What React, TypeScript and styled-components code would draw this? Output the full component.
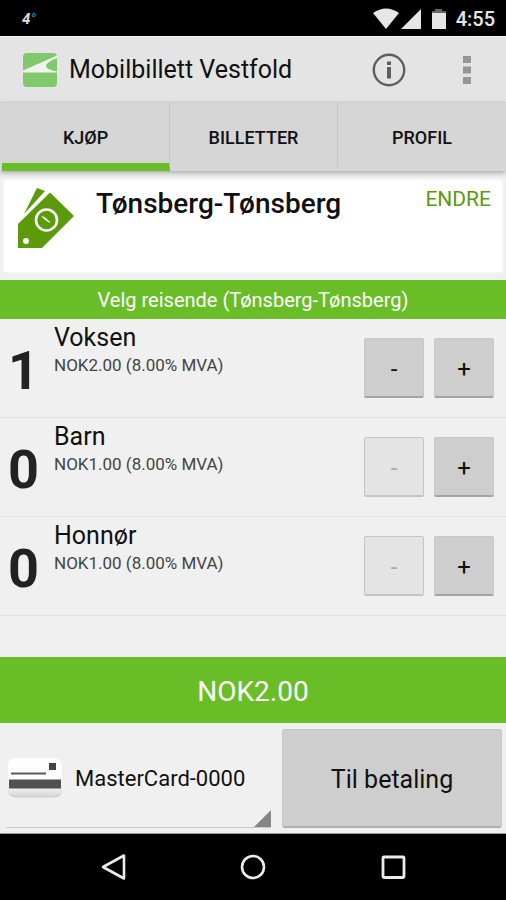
import React, { useState } from "react";
import styled, { createGlobalStyle } from "styled-components";

const GREEN = "#69be28";
const LEAF = "#5b9a0a";

const GlobalStyle = createGlobalStyle`
  *, *::before, *::after { box-sizing: border-box; }
  body { margin: 0; background: #f0f0f0; }
  button, select { font: inherit; color: inherit; margin: 0; }
`;

const Screen = styled.div`
  min-height: 100vh;
  display: flex;
  flex-direction: column;
  background: #f0f0f0;
  color: #111;
  font-family: Roboto, "Liberation Sans", sans-serif;
`;

const StatusBar = styled.div`
  height: 36px;
  display: flex;
  align-items: center;
  justify-content: space-between;
  padding: 2px 11px 0 22px;
  background: #000;
  color: #e6e6e6;
`;

const Temperature = styled.span`
  display: flex;
  color: #ddd;
  font-size: 15px;
  font-weight: 700;
  font-style: italic;
`;

const Degree = styled.span`
  color: #1288b4;
`;

const StatusIcons = styled.div`
  display: flex;
  align-items: center;
  gap: 9px;
`;

const Clock = styled.span`
  font-size: 20px;
  line-height: 24px;
  font-weight: 500;
`;

const AppBar = styled.header`
  height: 66px;
  display: flex;
  align-items: center;
  padding: 0 35px 0 23px;
  background: #e4e4e4;
  border-top: 1px solid #f6f6f6;
`;

const AppTitle = styled.h1`
  flex: 1;
  margin: 0 0 0 12px;
  font-size: 25px;
  line-height: 32px;
  font-weight: 400;
`;

const IconButton = styled.button`
  display: flex;
  padding: 0;
  border: 0;
  background: none;
  cursor: pointer;
`;

const AppActions = styled.div`
  display: flex;
  align-items: center;
  gap: 57px;
`;

const Tabs = styled.nav`
  height: 69px;
  flex: none;
  display: grid;
  grid-template-columns: repeat(3, 1fr);
  padding-left: 2px;
  background: #d6d6d6;
  border-top: 1px solid #cfcfcf;
  box-shadow: 0 2px 5px rgba(0, 0, 0, 0.3);
`;

const Tab = styled.button<{ $active: boolean }>`
  padding: 10px 0 0;
  border: 0;
  border-right: 1px solid #c6c6c6;
  border-bottom: 8px solid ${(p) => (p.$active ? GREEN : "transparent")};
  background: none;
  font-size: 18px;
  line-height: 24px;
  font-weight: 500;
  cursor: pointer;

  &:last-child { border-right: 0; }
`;

const Route = styled.section`
  min-height: 92px;
  display: flex;
  align-items: flex-start;
  margin: 9px 4px 8px;
  padding: 7px 11px 0 13px;
  background: #fff;
  box-shadow: 0 0 3px #fff;
`;

const RouteName = styled.h2`
  flex: 1;
  margin: 0 0 0 21px;
  font-size: 28px;
  line-height: 34px;
  font-weight: 500;
`;

const ChangeButton = styled.button`
  padding: 0;
  border: 0;
  background: none;
  color: ${LEAF};
  font-size: 21px;
  line-height: 24px;
  cursor: pointer;
`;

const Band = styled.h3`
  margin: 0;
  height: 39px;
  background: ${GREEN};
  color: #fff;
  font-size: 20px;
  line-height: 40px;
  font-weight: 400;
  text-align: center;
`;

const Travellers = styled.ul`
  flex: 1;
  margin: 0;
  padding: 0;
  list-style: none;
`;

const Traveller = styled.li`
  height: 99px;
  display: flex;
  align-items: flex-start;
  padding-right: 12px;
  border-bottom: 1px solid #e2e2e2;
`;

const Count = styled.output`
  width: 54px;
  padding: 20px 0 0 8px;
  color: #222;
  font-size: 54px;
  line-height: 64px;
  font-weight: 700;
`;

const TravellerInfo = styled.div`
  flex: 1;
  padding-top: 4px;
`;

const TravellerName = styled.div`
  font-size: 25px;
  line-height: 30px;
`;

const TravellerPrice = styled.div`
  color: #444;
  font-size: 17px;
  line-height: 25px;
`;

const Stepper = styled.div`
  display: flex;
  gap: 10px;
  padding-top: 19px;
`;

const StepButton = styled.button`
  width: 60px;
  height: 60px;
  padding: 2px 0 0;
  border: 1px solid #c6c6c6;
  border-bottom: 2px solid #a4a4a4;
  border-radius: 2px;
  background: #cecece;
  font-size: 24px;
  line-height: 24px;
  cursor: pointer;

  &:disabled {
    border-color: #c4c4c4;
    background: #e4e4e4;
    color: #aaa;
    cursor: default;
  }
`;

const Total = styled.div`
  height: 66px;
  background: ${GREEN};
  color: #fff;
  font-size: 28px;
  line-height: 69px;
  text-align: center;
`;

const Checkout = styled.footer`
  height: 111px;
  display: grid;
  grid-template-columns: 265fr 220fr;
  gap: 11px;
  padding: 6px 4px 5px 6px;
  border-bottom: 1px solid #999;
`;

const CardPicker = styled.label`
  position: relative;
  display: flex;
  align-items: center;
  padding-left: 1px;
  border-bottom: 1px solid #c9c9c9;
`;

const CardSelect = styled.select`
  flex: 1;
  align-self: stretch;
  min-width: 0;
  padding: 0 0 0 12px;
  border: 0;
  background: none;
  appearance: none;
  font-size: 22px;
  cursor: pointer;
`;

const Corner = styled.svg`
  position: absolute;
  right: 0;
  bottom: 0;
  pointer-events: none;
`;

const PayButton = styled.button`
  padding: 2px 0 0;
  border: 1px solid #c6c6c6;
  border-bottom: 2px solid #b0b0b0;
  border-radius: 3px;
  background: #cecece;
  font-size: 25px;
  cursor: pointer;
`;

const SystemNav = styled.nav`
  height: 66px;
  display: flex;
  align-items: center;
  justify-content: center;
  gap: 112px;
  background: #000;
`;

const tabs = ["KJØP", "BILLETTER", "PROFIL"];

const fares = [
  { name: "Voksen", price: 2 },
  { name: "Barn", price: 1 },
  { name: "Honnør", price: 1 },
];

const nok = (value: number) => `NOK${value.toFixed(2)}`;

function Logo() {
  return (
    <svg width="34" height="34" viewBox="0 0 34 34" aria-hidden="true">
      <rect width="34" height="34" rx="4" fill="#80c96d" />
      <path d="M0 17.500 L34 2.500 V5 Q26 8 23 12 Q22 16 34 18.500 V19.500 H0 Z" fill="#f1f3f0" />
    </svg>
  );
}

function TicketIcon() {
  return (
    <svg width="58" height="62" viewBox="0 0 58 62" aria-hidden="true">
      <path d="M20 1 L28 4 L7 27 Z" fill={LEAF} />
      <path d="M33 5.500 L57 29 L25 61 H1 V37 Z" fill={LEAF} />
      <circle cx="29.500" cy="33" r="10.500" fill="none" stroke="#fff" strokeWidth="2.600" />
      <path d="M25 29.500 L28.500 31 L33 35.500 L28.500 33 Z" fill="#fff" stroke="#fff" strokeWidth="0.800" />
      <circle cx="9" cy="54" r="3" fill="#fff" />
    </svg>
  );
}

function CardIcon() {
  return (
    <svg width="56" height="40" viewBox="0 0 56 40" aria-hidden="true">
      <defs>
        <linearGradient id="cardFace" x1="0" y1="0" x2="0" y2="1">
          <stop offset="0" stopColor="#fff" />
          <stop offset="0.700" stopColor="#fafafa" />
          <stop offset="1" stopColor="#d8d8d8" />
        </linearGradient>
      </defs>
      <rect x="1" y="1.500" width="54" height="38" rx="7" fill="#d0d0d0" />
      <rect x="1" y="0.500" width="54" height="37.500" rx="7" fill="url(#cardFace)" />
      <path d="M4 15.500 H39" stroke="#5c5c5c" strokeWidth="2" />
      <rect x="42" y="5" width="7" height="7" fill="#444" />
      <rect x="2" y="21.500" width="52" height="9" fill="#505050" />
    </svg>
  );
}

export default function App() {
  const [active, setActive] = useState(0);
  const [counts, setCounts] = useState([1, 0, 0]);

  const change = (index: number, step: number) =>
    setCounts((all) => all.map((n, i) => (i === index ? Math.max(0, n + step) : n)));

  const total = fares.reduce((sum, fare, i) => sum + fare.price * counts[i], 0);

  return (
    <Screen>
      <GlobalStyle />
      <StatusBar>
        <Temperature>
          4<Degree>°</Degree>
        </Temperature>
        <StatusIcons>
          <svg width="74" height="22" viewBox="0 0 74 22" aria-hidden="true">
            <path d="M0 5 Q13 -4 26 5 L13 21 Z" fill="#e6e6e6" />
            <path d="M48 1 V21 H28 Z" fill="#e6e6e6" />
            <path d="M59 5 V3 H62 V1 H69 V3 H73 V5 Z" fill="#666" />
            <rect x="59" y="5" width="14" height="16" fill="#e6e6e6" />
          </svg>
          <Clock>4:55</Clock>
        </StatusIcons>
      </StatusBar>

      <AppBar>
        <Logo />
        <AppTitle>Mobilbillett Vestfold</AppTitle>
        <AppActions>
          <IconButton aria-label="Informasjon">
            <svg width="34" height="34" viewBox="0 0 34 34">
              <circle cx="17" cy="17" r="15.200" fill="none" stroke="#5e5e5e" strokeWidth="2.400" />
              <rect x="15" y="8.500" width="4" height="3.500" fill="#5e5e5e" />
              <rect x="15" y="14" width="4" height="11.500" fill="#5e5e5e" />
            </svg>
          </IconButton>
          <IconButton aria-label="Flere valg">
            <svg width="8" height="28" viewBox="0 0 8 28" fill="#969696">
              <rect width="8" height="7" />
              <rect y="10.500" width="8" height="7" />
              <rect y="21" width="8" height="7" />
            </svg>
          </IconButton>
        </AppActions>
      </AppBar>

      <Tabs>
        {tabs.map((label, i) => (
          <Tab key={label} $active={i === active} onClick={() => setActive(i)}>
            {label}
          </Tab>
        ))}
      </Tabs>

      <Route>
        <TicketIcon />
        <RouteName>Tønsberg-Tønsberg</RouteName>
        <ChangeButton>ENDRE</ChangeButton>
      </Route>

      <Band>Velg reisende (Tønsberg-Tønsberg)</Band>

      <Travellers>
        {fares.map((fare, i) => (
          <Traveller key={fare.name}>
            <Count>{counts[i]}</Count>
            <TravellerInfo>
              <TravellerName>{fare.name}</TravellerName>
              <TravellerPrice>{nok(fare.price)} (8.00% MVA)</TravellerPrice>
            </TravellerInfo>
            <Stepper>
              <StepButton
                aria-label={`Færre ${fare.name}`}
                disabled={counts[i] === 0}
                onClick={() => change(i, -1)}
              >
                -
              </StepButton>
              <StepButton aria-label={`Flere ${fare.name}`} onClick={() => change(i, 1)}>
                +
              </StepButton>
            </Stepper>
          </Traveller>
        ))}
      </Travellers>

      <Total>{nok(total)}</Total>

      <Checkout>
        <CardPicker>
          <CardIcon />
          <CardSelect aria-label="Betalingskort">
            <option>MasterCard-0000</option>
          </CardSelect>
          <Corner width="17" height="17" viewBox="0 0 17 17" aria-hidden="true">
            <path d="M17 0 V17 H0 Z" fill="#858585" />
          </Corner>
        </CardPicker>
        <PayButton>Til betaling</PayButton>
      </Checkout>

      <SystemNav>
        <IconButton aria-label="Tilbake">
          <svg width="28" height="28" viewBox="0 0 28 28" fill="none" stroke="#ececec" strokeWidth="2.600">
            <path d="M25 2.500 V25.500 L4 14 Z" strokeLinejoin="round" />
          </svg>
        </IconButton>
        <IconButton aria-label="Hjem">
          <svg width="28" height="28" viewBox="0 0 28 28" fill="none" stroke="#ececec" strokeWidth="2.600">
            <circle cx="14" cy="14" r="11" />
          </svg>
        </IconButton>
        <IconButton aria-label="Oversikt">
          <svg width="28" height="28" viewBox="0 0 28 28" fill="none" stroke="#ececec" strokeWidth="2.800">
            <rect x="4" y="4" width="21" height="20.500" rx="1" />
          </svg>
        </IconButton>
      </SystemNav>
    </Screen>
  );
}
